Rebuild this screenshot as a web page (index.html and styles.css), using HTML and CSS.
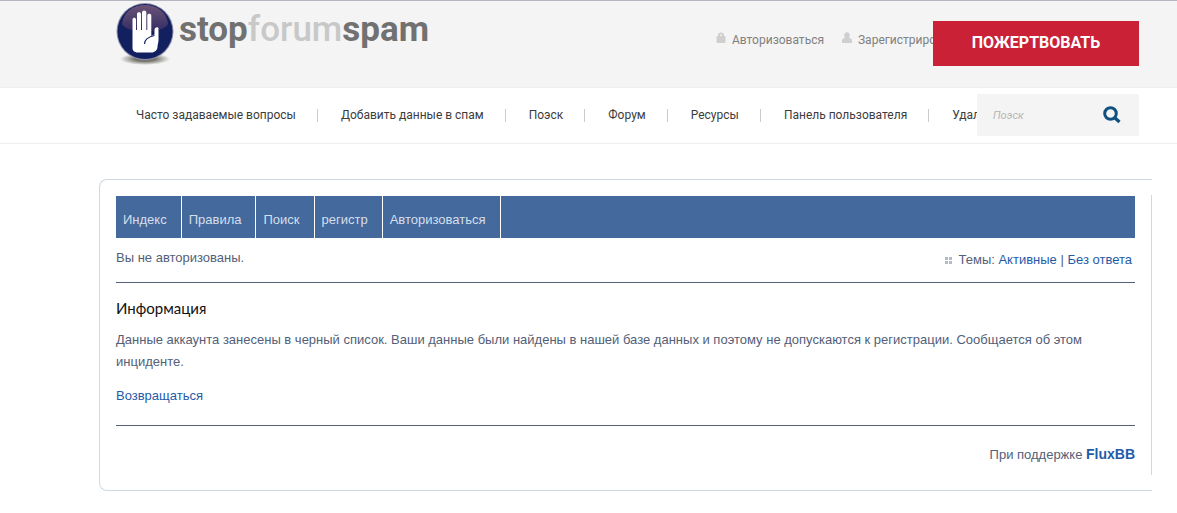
FILE: index.html
```
<!DOCTYPE html>
<html lang="ru">
<head>
    <meta charset="utf-8">
    <title>Stop Forum Spam</title>
    <link rel="stylesheet" href="styles.css">
</head>
<body>
    <header class="header">
        <a class="logo" href="#">
            <svg class="logo-icon" width="60" height="66" viewBox="0 0 60 66" aria-hidden="true">
                <defs>
                    <linearGradient id="shine" x1="0" y1="0" x2="0" y2="1">
                        <stop offset="0" stop-color="#6b5475"/>
                        <stop offset="1" stop-color="#352c64"/>
                    </linearGradient>
                    <radialGradient id="shadow">
                        <stop offset="0.4" stop-color="#77756c"/>
                        <stop offset="1" stop-color="#f4f4f4"/>
                    </radialGradient>
                </defs>
                <ellipse cx="29" cy="58" rx="25" ry="6" fill="url(#shadow)"/>
                <circle cx="29" cy="30.500" r="28.5" fill="#8f91ad"/>
                <circle cx="29" cy="30.500" r="27.5" fill="#13205f"/>
                <path d="M6 23C7 11 17 4 29 4s22 7 23 19c-3 5-10 7-23 7S9 28 6 23z" fill="url(#shine)"/>
                <path d="M16.500 47V18.500c0-2.300 3.500-2.300 3.500 0V29h1V13c0-2.500 4-2.500 4 0v16h1V11.500c0-2.700 4.300-2.700 4.300 0V29h1V14.500c0-2.500 4-2.500 4 0V35l3.200-1.500V29c0-3 4-3.500 4-1.500V39c0 3-1 4-1 7 0 3-3 5.500-6 5.500H22c-3 0-5.500-1.500-5.500-4.500z" fill="#fff"/>
                <path d="M28.500 43c0-4 3-7 10-8.500" fill="none" stroke="#13205f" stroke-width="1.200"/>
            </svg>
            <span class="logo-text">stop<span class="logo-light">forum</span>spam</span>
        </a>
        <nav class="user-links">
            <a href="#">
                <svg width="10" height="12" viewBox="0 0 10 12" aria-hidden="true"><path d="M3 5V3.500a2 2 0 0 1 4 0V5" fill="none" stroke="#cfcfcf" stroke-width="2"/><rect x="0.500" y="4" width="9" height="7" rx="1" fill="#cfcfcf"/></svg>
                Авторизоваться
            </a>
            <a href="#">
                <svg width="10" height="12" viewBox="0 0 10 12" aria-hidden="true"><ellipse cx="5" cy="3.500" rx="2.700" ry="3.200" fill="#cfcfcf"/><path d="M0 11V9c0-2 1-3 3-3h4c2 0 3 1 3 3v2z" fill="#cfcfcf"/></svg>
                Зарегистрироваться
            </a>
        </nav>
        <button class="donate" type="button">ПОЖЕРТВОВАТЬ</button>
    </header>

    <div class="navbar">
        <nav class="main-nav">
            <a href="#">Часто задаваемые вопросы</a>
            <a href="#">Добавить данные в спам</a>
            <a href="#">Поэск</a>
            <a href="#">Форум</a>
            <a href="#">Ресурсы</a>
            <a href="#">Панель пользователя</a>
            <a href="#">Удаление</a>
        </nav>
        <form class="search">
            <input type="text" placeholder="Поэск" aria-label="Поэск">
            <button type="submit" aria-label="Поэск">
                <svg width="18" height="18" viewBox="0 0 18 18" aria-hidden="true"><circle cx="7.500" cy="7.500" r="5.800" fill="none" stroke="#10507f" stroke-width="3"/><path d="M12 12l4.500 4" stroke="#10507f" stroke-width="3.200"/></svg>
            </button>
        </form>
    </div>

    <main class="forum">
        <div class="forum-inner">
            <nav class="forum-menu">
                <a href="#">Индекс</a>
                <a href="#">Правила</a>
                <a href="#">Поиск</a>
                <a href="#">регистр</a>
                <a href="#">Авторизоваться</a>
            </nav>
            <div class="welcome">
                <p>Вы не авторизованы.</p>
                <p class="topics">
                    <svg width="7" height="7" viewBox="0 0 7 7" aria-hidden="true"><path d="M0 0h3v3H0zM4 0h3v3H4zM0 4h3v3H0zM4 4h3v3H4z" fill="#b4bccb"/></svg>
                    <span>Темы: <a href="#">Активные</a> | <a href="#">Без ответа</a></span>
                </p>
            </div>
            <section class="message">
                <h2>Информация</h2>
                <p>Данные аккаунта занесены в черный список. Ваши данные были найдены в нашей базе данных и поэтому не допускаются к регистрации. Сообщается об этом инциденте.</p>
                <p><a href="#">Возвращаться</a></p>
            </section>
            <footer class="powered">При поддержке <a href="#">FluxBB</a></footer>
        </div>
    </main>
</body>
</html>
```
FILE: styles.css
```
* {
    box-sizing: border-box;
}

body {
    margin: 0;
    background-color: #fff;
    font-family: "Liberation Sans", Arial, sans-serif;
    font-size: 13px;
    line-height: 22px;
    color: #536078;
}

a {
    color: #1f5ba9;
    text-decoration: none;
}

p, h2 {
    margin: 0;
}

/* top bar */
.header {
    display: flex;
    align-items: flex-start;
    height: 88px;
    padding: 0 38px 0 116px;
    background-color: #f4f4f4;
    border-top: 1px solid #b5b8c0;
    border-bottom: 1px solid #eee;
    font-family: Roboto, sans-serif;
}

.logo {
    display: flex;
    gap: 3px;
    margin-right: auto;
}

.logo-text {
    padding-top: 9px;
    font-size: 35px;
    line-height: 40px;
    font-weight: 700;
    color: #717171;
}

.logo-light {
    font-weight: 500;
    color: #c8c8c8;
}

.user-links {
    display: flex;
    gap: 18px;
    width: 217px;
    margin-top: 28px;
    overflow: hidden;
    white-space: nowrap;
}

.user-links a {
    flex-shrink: 0;
    font-size: 12px;
    color: #808080;
}

.user-links svg {
    margin-right: 3px;
}

.donate {
    width: 206px;
    height: 45px;
    margin-top: 20px;
    padding: 0 0 2px;
    border: 0;
    background-color: #ca2137;
    color: #fff;
    font: 700 16px Roboto, sans-serif;
}

/* main navigation */
.navbar {
    display: flex;
    align-items: center;
    height: 56px;
    padding: 0 38px 1px 116px;
    border-bottom: 1px solid #eee;
    font-family: Roboto, sans-serif;
}

.main-nav {
    display: flex;
    flex: 1;
    min-width: 0;
    overflow: hidden;
    white-space: nowrap;
}

.main-nav a {
    flex-shrink: 0;
    padding: 0 21px 0 23px;
    border-right: 1px solid #ccc;
    font-size: 12px;
    line-height: 13px;
    color: #3c3c3c;
}

.main-nav a:first-child {
    padding-left: 20px;
}

.search {
    display: flex;
    align-items: center;
    width: 162px;
    height: 42px;
    padding: 0 16px;
    background-color: #f4f4f4;
}

.search input {
    flex: 1;
    min-width: 0;
    padding: 0;
    border: 0;
    background: none;
    font: italic 11px Roboto, sans-serif;
}

.search input::placeholder {
    color: #b5b5b5;
}

.search button {
    display: flex;
    padding: 0 2px;
    border: 0;
    background: none;
}

/* forum box, the right edge stops short of the corners */
.forum {
    margin: 35px 25px 22px 99px;
    padding: 15px 0;
    border: 1px solid #ced9e2;
    border-right: 0;
    border-radius: 8px 0 0 8px;
}

.forum-inner {
    padding: 1px 16px 0;
    border-right: 1px solid #ced9e2;
}

.forum-menu {
    display: flex;
    background-color: #44699c;
}

.forum-menu a {
    padding: 13px 14px 7px 7px;
    border-right: 1px solid #fff;
    color: #d5dfec;
}

.welcome {
    display: flex;
    justify-content: space-between;
    padding: 9px 0 11px;
    border-bottom: 1px solid #536078;
}

.topics {
    display: flex;
    align-items: center;
    gap: 7px;
    padding: 2px 3px 0 0;
}

.message {
    padding: 14px 0 18px;
    border-bottom: 1px solid #536078;
}

.message h2 {
    margin-bottom: 10px;
    font: 400 15px/22px Lato, sans-serif;
    color: #111;
}

.message p + p {
    margin-top: 12px;
}

.powered {
    padding: 17px 0 9px;
    text-align: right;
}

.powered a {
    font-size: 14px;
    font-weight: 700;
}
```
